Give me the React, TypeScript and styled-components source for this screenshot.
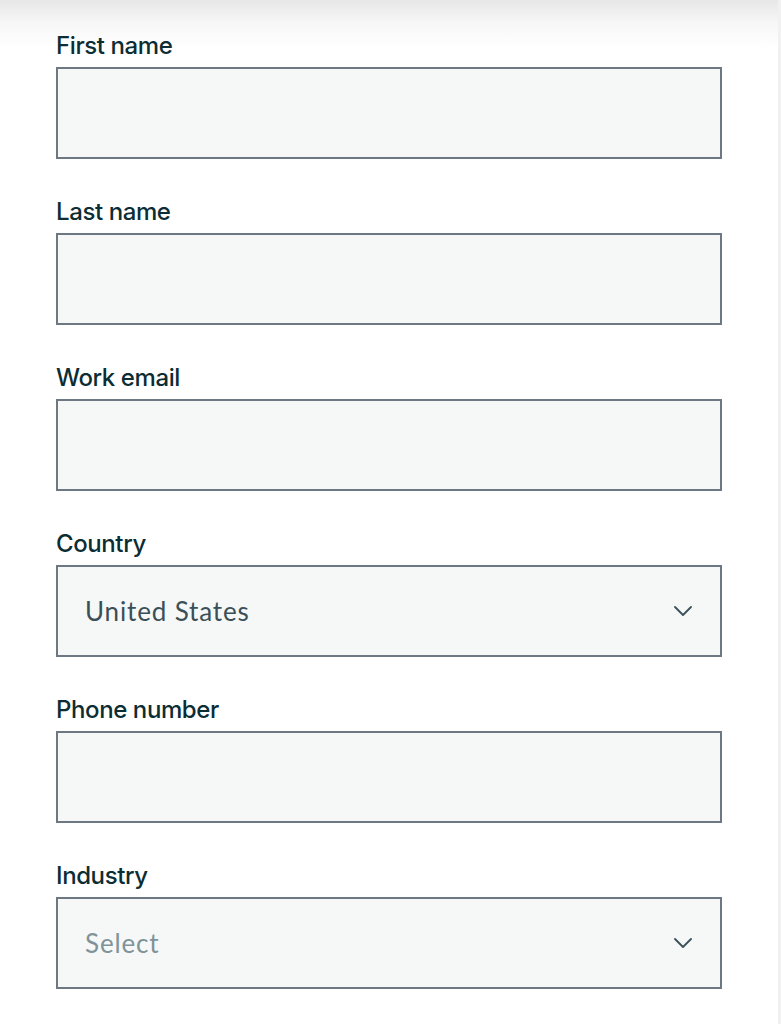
import React from "react";
import styled, { createGlobalStyle } from "styled-components";

const Global = createGlobalStyle`
  html, body { margin: 0; padding: 0; background: #ffffff; }
  body { font-family: "Inter", "Liberation Sans", sans-serif; }
  * { box-sizing: border-box; }
`;

const Page = styled.div`
  min-height: 1024px;
  background: linear-gradient(to bottom, #e7e7e7 0px, #f6f6f6 22px, #ffffff 48px);
  border-right: 3px solid #f1f1f1;
  padding: 30px 0 0 56px;
`;

const Form = styled.form`
  width: 666px;
  display: flex;
  flex-direction: column;
  gap: 37px;
`;

const Field = styled.div`
  display: flex;
  flex-direction: column;
  gap: 5px;
`;

const Label = styled.label`
  font-family: "Inter", sans-serif;
  font-size: 24px;
  font-weight: 500;
  line-height: 32px;
  letter-spacing: -0.4px;
  color: #0c2d34;
`;

const Box = styled.div`
  height: 92px;
  border: 2px solid #6d7883;
  background: #f6f8f8;
  display: flex;
  align-items: center;
  justify-content: space-between;
  padding: 0 28px 0 27px;
`;

const Value = styled.span<{ $placeholder?: boolean }>`
  font-family: "Lato", "Open Sans", sans-serif;
  font-size: 26px;
  color: ${(p) => (p.$placeholder ? "#7f9398" : "#3b4f57")};
  letter-spacing: 0.85px;
`;

const Chevron = () => (
  <svg width="18" height="10" viewBox="0 0 18 10" fill="none">
    <path d="M1 1l8 8 8-8" stroke="#3b4f57" strokeWidth="1.8" strokeLinecap="round" strokeLinejoin="round" />
  </svg>
);

const fields: { label: string; select?: string; placeholder?: boolean }[] = [
  { label: "First name" },
  { label: "Last name" },
  { label: "Work email" },
  { label: "Country", select: "United States" },
  { label: "Phone number" },
  { label: "Industry", select: "Select", placeholder: true },
];

export default function App() {
  return (
    <>
      <Global />
      <Page>
        <Form>
          {fields.map((f) => (
            <Field key={f.label}>
              <Label>{f.label}</Label>
              <Box>
                {f.select && (
                  <>
                    <Value $placeholder={f.placeholder}>{f.select}</Value>
                    <Chevron />
                  </>
                )}
              </Box>
            </Field>
          ))}
        </Form>
      </Page>
    </>
  );
}
